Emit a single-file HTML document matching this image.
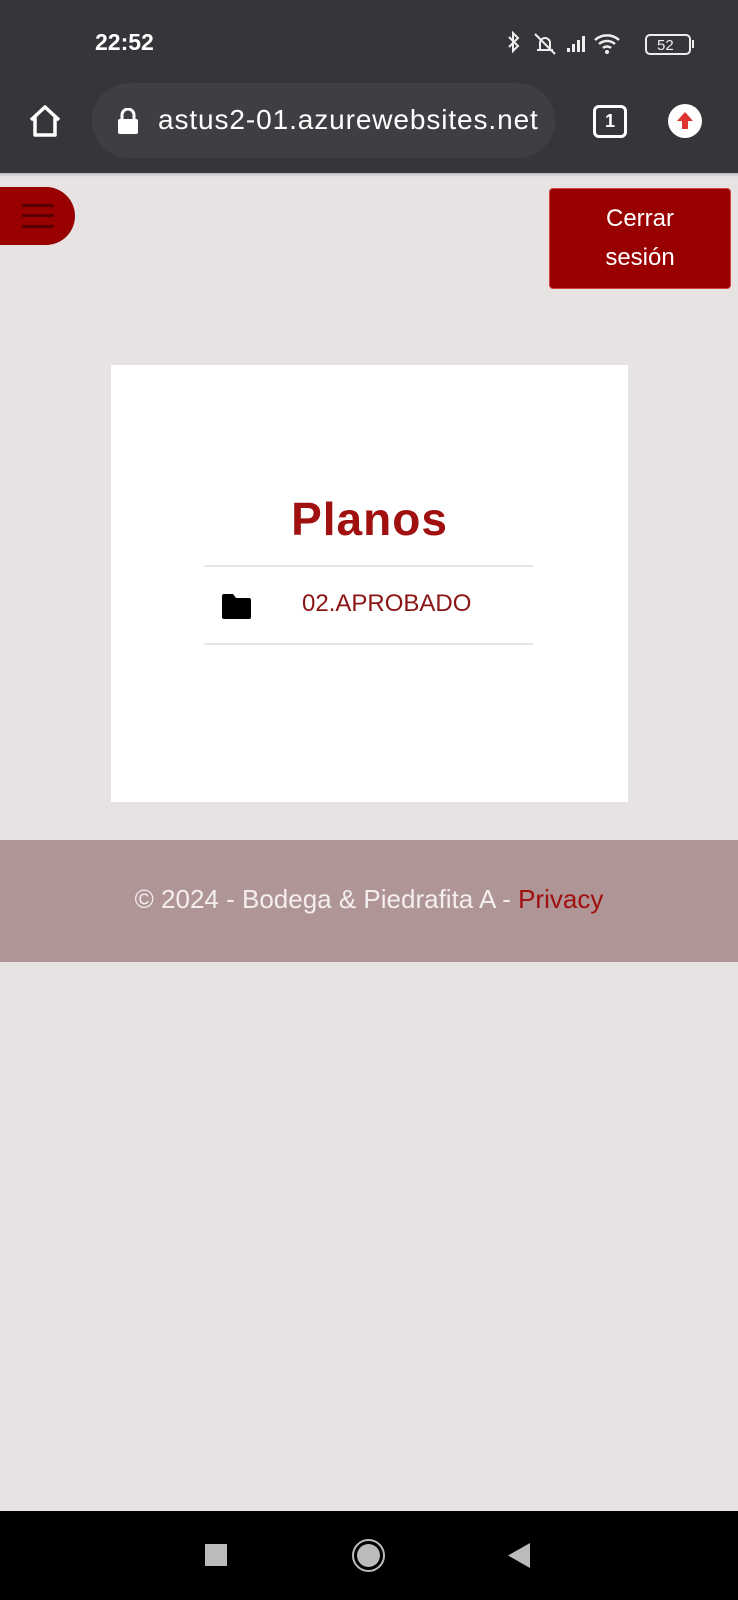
<!DOCTYPE html>
<html><head><meta charset="utf-8"><style>
*{margin:0;padding:0;box-sizing:border-box}
body{width:738px;height:1600px;background:#e8e3e3;font-family:"Liberation Sans",sans-serif;position:relative;overflow:hidden}
.abs{position:absolute}
</style></head><body>
<div class="abs" style="left:0;top:0;width:738px;height:173px;background:#35363a"></div>
<div class="abs" style="left:0;top:173px;width:738px;height:4px;background:linear-gradient(#bbb,#e8e3e3)"></div>
<div class="abs" style="left:95px;top:29px;color:#fff;font-size:23px;font-weight:bold">22:52</div>
<svg class="abs" style="left:505px;top:28px" width="190" height="32" viewBox="0 0 190 32">
<path d="M4 9l9 9-5 5V5l5 5-9 9" stroke="#eee" stroke-width="2" fill="none"/>
<path d="M32 22h16M35 22v-7a5 5 0 0 1 10 0v7M30 6l20 20" stroke="#eee" stroke-width="2" fill="none"/>
<rect x="62" y="20" width="3" height="4" fill="#eee"/><rect x="67" y="16" width="3" height="8" fill="#eee"/><rect x="72" y="12" width="3" height="12" fill="#eee"/><rect x="77" y="8" width="3" height="16" fill="#eee"/>
<path d="M90 12a18 18 0 0 1 24 0M94 16a12 12 0 0 1 16 0M98 20a6 6 0 0 1 8 0" stroke="#eee" stroke-width="2.5" fill="none"/><circle cx="102" cy="24" r="2" fill="#eee"/>
<rect x="141" y="7" width="44" height="19" rx="4" stroke="#eee" stroke-width="2" fill="none"/><rect x="187" y="12" width="2" height="8" fill="#eee"/>
<text x="152" y="22" fill="#eee" font-size="15" font-family="Liberation Sans">52</text>
</svg>
<svg class="abs" style="left:27px;top:104px" width="36" height="34" viewBox="0 0 36 34"><path d="M4 16L18 3l14 13M8 13v18h20V13" stroke="#fff" stroke-width="3.5" fill="none" stroke-linejoin="round"/></svg>
<div class="abs" style="left:92px;top:83px;width:463px;height:75px;border-radius:38px;background:#3e3f43"></div>
<svg class="abs" style="left:117px;top:108px" width="22" height="26" viewBox="0 0 22 26"><path d="M5 11V7a6 6 0 0 1 12 0v4" stroke="#fff" stroke-width="3" fill="none"/><rect x="1" y="11" width="20" height="15" rx="2" fill="#fff"/></svg>
<div class="abs" style="left:158px;top:104px;color:#fff;font-size:28px;letter-spacing:0.9px">astus2-01.azurewebsites.net</div>
<div class="abs" style="left:593px;top:105px;width:34px;height:33px;border:3px solid #fff;border-radius:6px;color:#fff;font-size:18px;font-weight:bold;text-align:center;line-height:27px">1</div>
<svg class="abs" style="left:668px;top:104px" width="34" height="34" viewBox="0 0 34 34"><circle cx="17" cy="17" r="17" fill="#fff"/><path d="M17 8l8 9h-5v8h-6v-8H9z" fill="#d33"/></svg>
<div class="abs" style="left:0;top:187px;width:75px;height:58px;background:#990000;border-radius:0 29px 29px 0"></div>
<div class="abs" style="left:22px;top:204px;width:32px;height:3px;background:#5a0000"></div>
<div class="abs" style="left:22px;top:214px;width:32px;height:3px;background:#5a0000"></div>
<div class="abs" style="left:22px;top:225px;width:32px;height:3px;background:#5a0000"></div>
<div class="abs" style="left:549px;top:188px;width:182px;height:101px;background:#990000;border:1px solid #c44;border-radius:4px;color:#fff;font-size:24px;text-align:center;line-height:39px;padding-top:10px">Cerrar<br>sesión</div>
<div class="abs" style="left:111px;top:365px;width:517px;height:437px;background:#fff"></div>
<div class="abs" style="left:111px;top:492px;width:517px;text-align:center;color:#a01010;font-size:46px;font-weight:bold;letter-spacing:1px">Planos</div>
<div class="abs" style="left:204px;top:565px;width:329px;height:2px;background:#e6e6e6"></div>
<div class="abs" style="left:204px;top:643px;width:329px;height:2px;background:#e6e6e6"></div>
<svg class="abs" style="left:222px;top:594px" width="29" height="25" viewBox="0 0 29 25"><path d="M2 0h9l3 4h13a2 2 0 0 1 2 2v17a2 2 0 0 1-2 2H2a2 2 0 0 1-2-2V2a2 2 0 0 1 2-2z" fill="#000"/></svg>
<div class="abs" style="left:302px;top:590px;color:#8a1515;font-size:24px">02.APROBADO</div>
<div class="abs" style="left:0;top:840px;width:738px;height:122px;background:#b09596"></div>
<div class="abs" style="left:0;top:884px;width:738px;text-align:center;color:#f4eeee;font-size:26px">© 2024 - Bodega &amp; Piedrafita A - <span style="color:#a00f0f">Privacy</span></div>
<div class="abs" style="left:0;top:1511px;width:738px;height:89px;background:#000"></div>
<div class="abs" style="left:205px;top:1544px;width:22px;height:22px;background:#bbb"></div>
<div class="abs" style="left:352px;top:1539px;width:33px;height:33px;border:2px solid #bbb;border-radius:50%"></div>
<div class="abs" style="left:357px;top:1544px;width:23px;height:23px;background:#bbb;border-radius:50%"></div>
<svg class="abs" style="left:508px;top:1543px" width="22" height="25" viewBox="0 0 22 25"><path d="M22 0v25L0 12.5z" fill="#bbb"/></svg>
</body></html>
